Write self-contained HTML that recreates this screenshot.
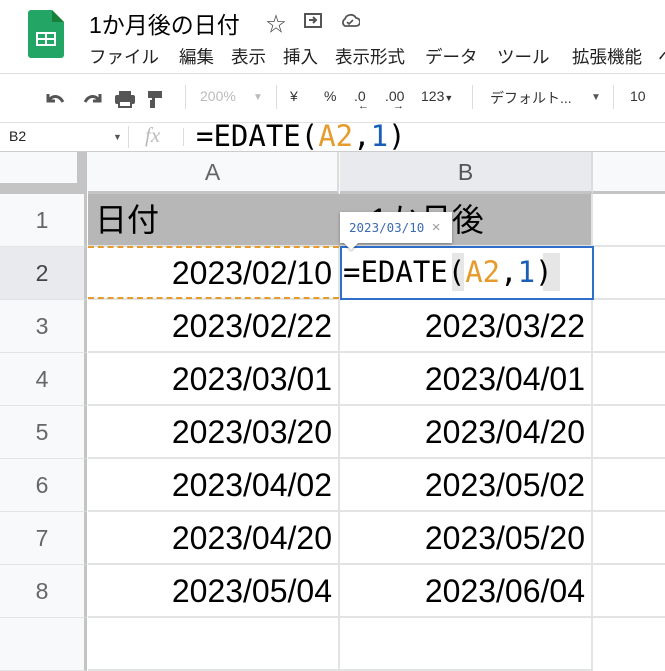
<!DOCTYPE html>
<html><head><meta charset="utf-8"><style>
*{margin:0;padding:0;box-sizing:border-box}
body{width:665px;height:626px;overflow:hidden;background:#fff;position:relative;font-family:"Liberation Sans","Noto Sans CJK JP",sans-serif;color:#202124}
.a{position:absolute}
.mono{font-family:"DejaVu Sans Mono","Liberation Mono","Noto Sans CJK JP",monospace}
.rh{position:absolute;left:0;width:87px;background:#f8f9fa;border-bottom:1px solid #e2e3e3;border-right:3px solid #c4c4c4;color:#666;font-size:23px;text-align:center;height:53px;line-height:52px}
.cell{position:absolute;height:53px;border-bottom:2px solid #e2e3e3;border-right:2px solid #e2e3e3;font-size:32px;line-height:52px;text-align:right;padding-right:6px;color:#000}
.tb{position:absolute;top:88px;font-size:14px;color:#333}
.m{position:absolute;top:44px;font-size:17.5px;color:#222;white-space:nowrap}
</style></head><body>
<svg class="a" style="left:28px;top:10px" width="36" height="48" viewBox="0 0 36 48"><path d="M3 0h21l12 12v33a3 3 0 0 1-3 3H3a3 3 0 0 1-3-3V3a3 3 0 0 1 3-3z" fill="#23a566"/><path d="M24 0v12h12z" fill="#188038"/><rect x="8" y="22" width="20" height="14" fill="#fff"/><rect x="10" y="24" width="7" height="4" fill="#23a566"/><rect x="19" y="24" width="7" height="4" fill="#23a566"/><rect x="10" y="30" width="7" height="4" fill="#23a566"/><rect x="19" y="30" width="7" height="4" fill="#23a566"/></svg>
<div class="a" style="left:89px;top:6px;font-size:23px;color:#000">1か月後の日付</div>
<div class="a" style="left:266px;top:8px;font-size:20px;color:#444">☆</div>
<svg class="a" style="left:304px;top:12px" width="18" height="16"><rect x="1" y="2" width="16" height="13" fill="none" stroke="#555" stroke-width="2"/><path d="M5 8h6M9 5l3 3-3 3" stroke="#555" stroke-width="2" fill="none"/></svg>
<svg class="a" style="left:340px;top:12px" width="20" height="16"><path d="M5 14h11a4 4 0 0 0 0-8 6 6 0 0 0-11 1 4 4 0 0 0 0 7z" fill="none" stroke="#555" stroke-width="1.8"/><path d="M7 10l2 2 4-4" stroke="#555" stroke-width="1.6" fill="none"/></svg>
<div class="m" style="left:89px">ファイル</div>
<div class="m" style="left:179px">編集</div>
<div class="m" style="left:231px">表示</div>
<div class="m" style="left:283px">挿入</div>
<div class="m" style="left:335px">表示形式</div>
<div class="m" style="left:425px">データ</div>
<div class="m" style="left:497px">ツール</div>
<div class="m" style="left:572px">拡張機能</div>
<div class="m" style="left:658px">ヘ</div>
<div class="a" style="left:0;top:73px;width:665px;height:1px;background:#dadce0"></div>
<svg class="a" style="left:44px;top:90px" width="140" height="18"><path d="M4 4v7h7" stroke="#555" stroke-width="3" fill="none"/><path d="M5 10c4-5 10-5 14 2" stroke="#555" stroke-width="3" fill="none"/><path d="M56 4v7h-7" stroke="#555" stroke-width="3" fill="none"/><path d="M55 10c-4-5-10-5-14 2" stroke="#555" stroke-width="3" fill="none"/><rect x="71" y="5" width="20" height="9" rx="2" fill="#555"/><rect x="75" y="1" width="12" height="4" fill="#555"/><rect x="75" y="11" width="12" height="6" fill="#fff" stroke="#555" stroke-width="2"/><rect x="104" y="1" width="14" height="7" fill="#555"/><rect x="108" y="8" width="3" height="3" fill="#555"/><rect x="106" y="10" width="5" height="8" fill="#555"/></svg>
<div class="a" style="left:185px;top:85px;width:1px;height:24px;background:#dadce0"></div>
<div class="tb" style="left:200px;color:#bbb">200%</div>
<div class="tb" style="left:253px;color:#bbb;font-size:10px;top:92px">▼</div>
<div class="a" style="left:276px;top:85px;width:1px;height:24px;background:#dadce0"></div>
<div class="tb" style="left:290px">¥</div>
<div class="tb" style="left:324px">%</div>
<div class="tb" style="left:354px">.0</div>
<div class="tb" style="left:358px;top:100px;font-size:11px">←</div>
<div class="tb" style="left:385px">.00</div>
<div class="tb" style="left:393px;top:100px;font-size:11px">→</div>
<div class="tb" style="left:421px">123<span style="font-size:9px">▼</span></div>
<div class="a" style="left:472px;top:85px;width:1px;height:24px;background:#dadce0"></div>
<div class="tb" style="left:490px">デフォルト...</div>
<div class="tb" style="left:591px;font-size:10px;top:92px;color:#555">▼</div>
<div class="a" style="left:613px;top:85px;width:1px;height:24px;background:#dadce0"></div>
<div class="tb" style="left:630px">10</div>
<div class="a" style="left:0;top:122px;width:665px;height:1px;background:#e0e0e0"></div>
<div class="a" style="left:9px;top:128px;font-size:14px;color:#222">B2</div>
<div class="a" style="left:113px;top:132px;font-size:9px;color:#555">▼</div>
<div class="a" style="left:128px;top:126px;width:1px;height:22px;background:#ddd"></div>
<div class="a" style="left:145px;top:123px;font-size:21px;color:#bbb;font-style:italic;font-family:'Liberation Serif',serif">fx</div>
<div class="a" style="left:183px;top:128px;width:1px;height:18px;background:#ddd"></div>
<div class="a mono" style="left:196px;top:119px;font-size:29px;color:#000;white-space:nowrap">=EDATE(<span style="color:#e69b2d">A2</span>,<span style="color:#1a5eb8">1</span>)</div>
<div class="a" style="left:0;top:151px;width:665px;height:1px;background:#ccc"></div>
<div class="a" style="left:0;top:152px;width:665px;height:42px;background:#f8f9fa"></div>
<div class="a" style="left:77px;top:152px;width:10px;height:42px;background:#c4c4c4"></div>
<div class="a" style="left:0;top:183px;width:87px;height:11px;background:#c4c4c4"></div>
<div class="a" style="left:88px;top:152px;width:251px;height:42px;border-right:2px solid #dcdcdc;border-bottom:3px solid #c4c4c4;color:#666;font-size:23px;text-align:center;line-height:40px">A</div>
<div class="a" style="left:340px;top:152px;width:253px;height:42px;background:#e8eaed;border-right:2px solid #dcdcdc;border-bottom:3px solid #c4c4c4;color:#555;font-size:23px;text-align:center;line-height:40px">B</div>
<div class="a" style="left:593px;top:152px;width:72px;height:42px;border-bottom:3px solid #c4c4c4"></div>
<div class="rh" style="top:194px">1</div>
<div class="rh" style="top:247px;background:#e8eaed;color:#444">2</div>
<div class="rh" style="top:300px">3</div>
<div class="rh" style="top:353px">4</div>
<div class="rh" style="top:406px">5</div>
<div class="rh" style="top:459px">6</div>
<div class="rh" style="top:512px">7</div>
<div class="rh" style="top:565px">8</div>
<div class="rh" style="top:618px"></div>
<div class="cell" style="left:88px;top:194px;width:252px;background:#b7b7b7;text-align:left;padding-left:7px;border-right-color:#b7b7b7">日付</div>
<div class="cell" style="left:340px;top:194px;width:253px;background:#b7b7b7;text-align:left;padding-left:30px">1か月後</div>
<div class="cell" style="left:593px;top:194px;width:80px"></div>
<div class="cell" style="left:88px;top:247px;width:252px">2023/02/10</div>
<div class="cell" style="left:593px;top:247px;width:80px"></div>
<div class="a" style="left:88px;top:246px;width:251px;border-top:2px dashed #e69b2d"></div>
<div class="a" style="left:88px;top:297px;width:251px;border-top:2px dashed #e69b2d"></div>
<div class="cell" style="left:88px;top:300px;width:252px">2023/02/22</div>
<div class="cell" style="left:340px;top:300px;width:253px">2023/03/22</div>
<div class="cell" style="left:593px;top:300px;width:80px"></div>
<div class="cell" style="left:88px;top:353px;width:252px">2023/03/01</div>
<div class="cell" style="left:340px;top:353px;width:253px">2023/04/01</div>
<div class="cell" style="left:593px;top:353px;width:80px"></div>
<div class="cell" style="left:88px;top:406px;width:252px">2023/03/20</div>
<div class="cell" style="left:340px;top:406px;width:253px">2023/04/20</div>
<div class="cell" style="left:593px;top:406px;width:80px"></div>
<div class="cell" style="left:88px;top:459px;width:252px">2023/04/02</div>
<div class="cell" style="left:340px;top:459px;width:253px">2023/05/02</div>
<div class="cell" style="left:593px;top:459px;width:80px"></div>
<div class="cell" style="left:88px;top:512px;width:252px">2023/04/20</div>
<div class="cell" style="left:340px;top:512px;width:253px">2023/05/20</div>
<div class="cell" style="left:593px;top:512px;width:80px"></div>
<div class="cell" style="left:88px;top:565px;width:252px">2023/05/04</div>
<div class="cell" style="left:340px;top:565px;width:253px">2023/06/04</div>
<div class="cell" style="left:593px;top:565px;width:80px"></div>
<div class="cell" style="left:88px;top:618px;width:252px"></div>
<div class="cell" style="left:340px;top:618px;width:253px"></div>
<div class="a" style="left:340px;top:246px;width:254px;height:54px;background:#fff;border:2px solid #2f6fc9"></div>
<div class="a" style="left:452px;top:253px;width:12px;height:38px;background:#e6e6e6"></div>
<div class="a" style="left:543px;top:253px;width:17px;height:38px;background:#e6e6e6"></div>
<div class="a mono" style="left:343px;top:253px;font-size:29px;line-height:38px;color:#000;white-space:nowrap">=EDATE(<span style="color:#e69b2d">A2</span>,<span style="color:#1a5eb8">1</span>)</div>
<div class="a" style="left:340px;top:212px;width:112px;height:31px;background:#fff;box-shadow:0 1px 3px rgba(0,0,0,.35)"></div>
<div class="a" style="left:346px;top:238px;width:10px;height:10px;background:#fff;transform:rotate(45deg);box-shadow:1px 1px 2px rgba(0,0,0,.25)"></div>
<div class="a" style="left:341px;top:236px;width:30px;height:7px;background:#fff"></div>
<div class="a mono" style="left:349px;top:219px;font-size:12.5px;color:#3d6bb3">2023/03/10 <span style="color:#999;font-family:'Liberation Sans',sans-serif;font-size:15px">×</span></div>
</body></html>
